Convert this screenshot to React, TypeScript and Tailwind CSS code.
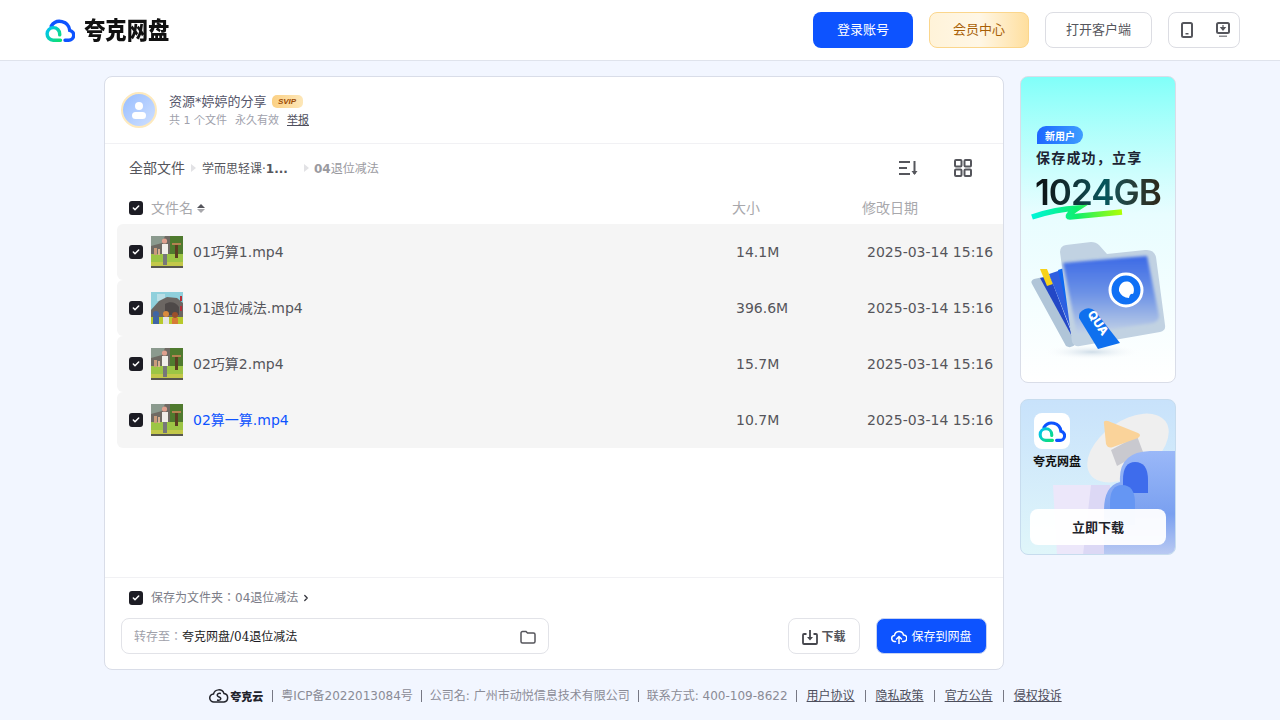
import { Check, ChevronRight } from "lucide-react";

const sans = { fontFamily: '"DejaVu Sans","Noto Sans CJK JP",sans-serif' };

const files = [
  { name: "01巧算1.mp4", size: "14.1M", alt: false, active: false },
  { name: "01退位减法.mp4", size: "396.6M", alt: true, active: false },
  { name: "02巧算2.mp4", size: "15.7M", alt: false, active: false },
  { name: "02算一算.mp4", size: "10.7M", alt: false, active: true },
];

const links = ["用户协议", "隐私政策", "官方公告", "侵权投诉"];

function CloudLogo({ id, className }: { id: string; className: string }) {
  return (
    <svg viewBox="0 0 30 24" fill="none" className={className}>
      <defs>
        <linearGradient id={id} x1="2" y1="10" x2="16" y2="22" gradientUnits="userSpaceOnUse">
          <stop offset="0" stopColor="#00c2f3" />
          <stop offset="1" stopColor="#10e070" />
        </linearGradient>
      </defs>
      <path d="M20 22.200h3.500a5 5 0 0 0 1.200-9.900A10 10 0 0 0 6.300 8" stroke="#0d53ff" strokeWidth="3.400" strokeLinecap="round" />
      <path d="M15.500 22.200H8.200a6.300 6.300 0 1 1 6.500-6.300v1" stroke={`url(#${id})`} strokeWidth="3.400" strokeLinecap="round" />
    </svg>
  );
}

function Tick() {
  return (
    <span className="flex h-[14px] w-[14px] shrink-0 items-center justify-center rounded-[3px] bg-[#1c1c24]">
      <Check className="h-2 w-2 text-white" strokeWidth={4.5} />
    </span>
  );
}

function Thumb({ alt }: { alt: boolean }) {
  if (alt) {
    return (
      <svg viewBox="0 0 32 32" className="h-8 w-8 shrink-0">
        <rect width="32" height="32" fill="#8fd0dc" />
        <rect x="6" y="2" width="8" height="7" fill="#b9dfe6" />
        <path d="M0 18 8 9l8-4 10 1 6 5v15H0z" fill="#6b6662" />
        <path d="M14 12c5-3 11-2 14 3v8H14z" fill="#4e4948" />
        <rect x="29" y="4" width="2" height="5" fill="#b5303a" />
        <rect x="29" y="14" width="2" height="5" fill="#b5303a" />
        <rect y="25" width="32" height="7" fill="#b8c92c" />
        <circle cx="5" cy="22" r="3" fill="#3f65a5" />
        <rect x="2" y="25" width="6" height="7" fill="#3f65a5" />
        <circle cx="15" cy="22" r="3" fill="#d98a3e" />
        <rect x="12" y="25" width="6" height="7" fill="#e4e4e8" />
        <circle cx="24" cy="23" r="3" fill="#9c4f2b" />
        <rect x="21" y="26" width="6" height="6" fill="#d67a37" />
      </svg>
    );
  }
  return (
    <svg viewBox="0 0 32 32" className="h-8 w-8 shrink-0">
      <rect width="32" height="32" fill="#6f6a63" />
      <path d="M0 0h14l-3 7-11 3z" fill="#8b9a8e" />
      <rect x="19" width="13" height="20" fill="#4f7a2e" />
      <rect y="18" width="32" height="8" fill="#9cc545" />
      <rect y="26" width="32" height="4" fill="#c3c84a" />
      <rect y="30" width="32" height="2" fill="#58574f" />
      <rect x="24" y="9" width="3" height="13" fill="#5c3d22" />
      <rect x="21" y="7" width="9" height="2" fill="#b48350" />
      <rect x="3" y="12" width="3" height="7" fill="#c99b7b" />
      <rect x="7" y="13" width="2" height="6" fill="#d8b08f" />
      <circle cx="13.500" cy="5" r="2.600" fill="#e0a08e" />
      <rect x="11" y="8" width="6" height="10" fill="#f1eee9" />
      <rect x="12" y="18" width="4" height="11" fill="#77777a" />
    </svg>
  );
}

function FolderArt() {
  return (
    <svg viewBox="0 0 154 160" className="absolute bottom-0 left-0 h-[160px] w-[154px]">
      <defs>
        <linearGradient id="fold" x1="0" y1="0" x2="0" y2="1">
          <stop offset="0" stopColor="#3b69e6" />
          <stop offset="0.5" stopColor="#6f94e6" />
          <stop offset="1" stopColor="#c3d2e6" />
        </linearGradient>
        <radialGradient id="shade">
          <stop offset="0" stopColor="#cfdde8" />
          <stop offset="1" stopColor="#ffffff" stopOpacity="0" />
        </radialGradient>
        <filter id="soft">
          <feGaussianBlur stdDeviation="1.500" />
        </filter>
      </defs>
      <ellipse cx="71" cy="130" rx="50" ry="8" fill="url(#shade)" />
      <path d="M11 62q-2-3 2-5l14-3 28 68q-5 5-10 2z" fill="#b0c5d8" />
      <path d="M19 56l10-2 25 66z" fill="#2347c6" />
      <path d="M19 47h7l6 15-6 2z" fill="#f7d21a" />
      <path d="M28 52 40 48 54 118z" fill="#2f5fe0" />
      <path d="M37 48l9-3 8 73z" fill="#0f68f0" />
      <path d="M39 30q0-6 6-7l25-3q5 0 8 3l8 9 38-4q9-1 11 7l9 68q1 6-5 7l-80 14q-6 1-8-4z" fill="#c1d2e2" />
      <path d="M42 41q45-4 84-7l12 60q0 5-6 7l-76 11z" fill="url(#fold)" filter="url(#soft)" />
      <circle cx="105" cy="68" r="16" fill="#0f70f5" stroke="#ffffff" strokeWidth="3" />
      <path d="M98 69a7.500 8.500 0 1 1 14 3q-3-1-4 4-7 0-10-7z" fill="#ffffff" />
      <path d="M58 96q-1-6 6-9 6-2 10 2l25 32-22 6z" fill="#0f70ee" />
      <text transform="translate(66 92) rotate(56)" fill="#ffffff" fontSize="12" fontWeight="800" fontFamily="Inter,sans-serif">
        QUA
      </text>
    </svg>
  );
}

function BagArt() {
  return (
    <svg viewBox="0 0 154 154" className="absolute inset-0 h-full w-full">
      <defs>
        <linearGradient id="bag" x1="0" y1="0" x2="0" y2="1">
          <stop offset="0" stopColor="#9ab8f8" />
          <stop offset="0.6" stopColor="#7aa0f0" />
          <stop offset="1" stopColor="#bccbf2" />
        </linearGradient>
      </defs>
      <path d="M32 85h57v70H36z" fill="#ece7fa" />
      <path d="M70 85h19v70H62z" fill="#dcd8f5" />
      <ellipse cx="107" cy="48" rx="46" ry="27" transform="rotate(-35 107 48)" fill="#efefef" />
      <path d="M90 50 116 36l6 16-26 14z" fill="#c9c9cf" />
      <path d="M83 24q-1-4 4-3l30 12q4 2 0 5L92 47q-5 2-7-3z" fill="#fad39a" />
      <path d="M83 156v-46q0-24 16-28q-2-30 30-31 h25v105z" fill="url(#bag)" />
      <path d="M102 93V80q0-18 12-18 13 0 13 18v13z" fill="#3e6cec" />
      <path d="M89 125v-22q0-18 12-18 13 0 13 18v22z" fill="#6596f3" />
    </svg>
  );
}

export default function App() {
  return (
    <div className="flex h-[720px] w-[1280px] flex-col overflow-hidden bg-[#f2f6ff]" style={sans}>
      {/* top bar */}
      <header className="flex h-[61px] shrink-0 items-center justify-between border-b border-[#dfe3ec] bg-white pl-[45px] pr-10">
        <div className="flex items-center gap-[9px]">
          <CloudLogo id="logoA" className="h-6 w-[30px]" />
          <span className="-mt-[3px] origin-left scale-x-[0.89] text-[24px] font-black leading-none text-[#111]" style={{ fontFamily: '"Noto Sans CJK SC",sans-serif' }}>
            夸克网盘
          </span>
        </div>
        <div className="flex items-center gap-4 text-[13px]">
          <button className="h-9 w-[100px] rounded-lg bg-[#0d53ff] text-white">登录账号</button>
          <button className="h-9 w-[100px] rounded-lg border border-[#fbd68c] bg-gradient-to-r from-[#fff3d9] via-[#fff7e6] to-[#ffdf9e] text-[#a85f06]">会员中心</button>
          <button className="h-9 w-[107px] rounded-lg border border-[#dcdde3] bg-white text-[#55565c]">打开客户端</button>
          <div className="flex h-9 w-[72px] items-center justify-between rounded-lg border border-[#dcdde3] bg-white pl-3 pr-[9px]">
            <svg viewBox="0 0 12 16" className="h-4 w-3" fill="none">
              <rect x="1" y="1" width="10" height="14" rx="1.500" stroke="#55565c" strokeWidth="2" />
              <rect x="4.500" y="11" width="3" height="1.500" fill="#55565c" />
            </svg>
            <svg viewBox="0 0 14 16" className="h-4 w-[14px]" fill="none">
              <rect x="1" y="1" width="12" height="10" rx="1.500" stroke="#55565c" strokeWidth="2" />
              <path d="M7 3v3.200M5 5.600h4L7 8z" stroke="#55565c" strokeWidth="1.200" fill="#55565c" />
              <rect x="3" y="13.500" width="8" height="1.500" fill="#8b8b90" />
            </svg>
          </div>
        </div>
      </header>

      <main className="flex flex-1 justify-center gap-4 pt-[15px]">
        {/* share card */}
        <section className="flex h-[594px] w-[900px] flex-col rounded-lg border border-[#d9dde8] bg-white">
          <div className="flex h-[67px] shrink-0 items-center gap-3 border-b border-[#f1f1f4] pl-4">
            <div className="flex h-9 w-9 flex-col items-center justify-center gap-[2px] rounded-full border-2 border-[#fde9bd] bg-gradient-to-br from-[#98bdff] to-[#cfe0ff]">
              <span className="h-2 w-2 rounded-full bg-white" />
              <span className="h-[7px] w-[14px] rounded-full bg-white" />
            </div>
            <div>
              <div className="flex items-center gap-[5px] text-[13px] leading-[18px] text-[#55566a]">
                资源*婷婷的分享
                <span className="flex h-[13px] w-[31px] items-center justify-center rounded-[5px] bg-gradient-to-r from-[#fbd083] to-[#fde7b8] text-[8px] font-extrabold italic text-[#9c4a05]" style={{ fontFamily: '"Liberation Sans",sans-serif' }}>
                  SVIP
                </span>
              </div>
              <div className="mt-[3px] flex items-center text-[11px] leading-[14px] text-[#a0a1ac]">
                <span>共 1 个文件</span>
                <span className="ml-2">永久有效</span>
                <span className="ml-2 text-[#4d4e5c] underline">举报</span>
              </div>
            </div>
          </div>

          <div className="flex h-[48px] shrink-0 items-center pl-6 pr-[31px]">
            <span className="text-[14px] text-[#55565c]">全部文件</span>
            <span className="ml-[6px] h-0 w-0 border-y-[4px] border-l-[5px] border-y-transparent border-l-[#e2e2e5]" />
            <span className="ml-[6px] w-[89px] whitespace-nowrap pt-px text-[12px] text-[#55565c]">学而思轻课·<b>1...</b></span>
            <span className="ml-[13px] h-0 w-0 border-y-[4px] border-l-[5px] border-y-transparent border-l-[#e2e2e5]" />
            <span className="ml-[5px] pt-px text-[12px] text-[#9a9a9f]"><b>04</b>退位减法</span>
            <div className="ml-auto flex items-center gap-[36px]">
              <svg viewBox="0 0 20 16" className="h-4 w-5" fill="none" stroke="#55565c" strokeWidth="2">
                <path d="M1 2h11M1 8h8M1 14h11M16.500 1v13" />
                <path d="M13.500 11l3 4 3-4z" fill="#55565c" stroke="none" />
              </svg>
              <svg viewBox="0 0 18 18" className="h-[18px] w-[18px]" fill="none" stroke="#55565c" strokeWidth="2">
                <rect x="1" y="1" width="6.500" height="6.500" rx="1" />
                <rect x="10.500" y="1" width="6.500" height="6.500" rx="1" />
                <rect x="1" y="10.500" width="6.500" height="6.500" rx="1" />
                <rect x="10.500" y="10.500" width="6.500" height="6.500" rx="1" />
              </svg>
            </div>
          </div>

          {/* table head */}
          <div className="flex h-[32px] shrink-0 items-center pl-6 text-[14px] text-[#a8a8ac]">
            <Tick />
            <span className="ml-2">文件名</span>
            <span className="ml-1 flex flex-col gap-[1px]">
              <span className="h-0 w-0 border-x-[4px] border-b-[4px] border-x-transparent border-b-[#55555b]" />
              <span className="h-0 w-0 border-x-[4px] border-t-[4px] border-x-transparent border-t-[#a8a8ac]" />
            </span>
            <span className="ml-[527px] w-[130px]">大小</span>
            <span>修改日期</span>
          </div>

          {/* rows */}
          <div className="ml-3 flex-1">
            {files.map((f) => (
              <div key={f.name} className="flex h-[56px] items-center rounded-l-md bg-[#f5f5f5] pl-3 text-[14px] text-[#55555b]">
                <Tick />
                <span className="ml-2"><Thumb alt={f.alt} /></span>
                <span className={f.active ? "ml-[10px] w-[543px] text-[#0d53ff]" : "ml-[10px] w-[543px]"}>{f.name}</span>
                <span className="w-[131px]">{f.size}</span>
                <span className="whitespace-nowrap">2025-03-14 15:16</span>
              </div>
            ))}
          </div>

          {/* save options */}
          <div className="h-[92px] shrink-0 border-t border-[#f1f1f4] px-4">
            <div className="flex h-[40px] items-center pl-2 text-[12px] text-[#7c7d88]">
              <Tick />
              <span className="ml-2">保存为文件夹：04退位减法</span>
              <ChevronRight className="ml-[3px] h-[10px] w-[10px] text-[#33343c]" strokeWidth={3} />
            </div>
            <div className="flex items-center">
              <div className="flex h-9 w-[428px] items-center rounded-lg border border-[#e2e3e8] pl-3 pr-3 pt-px text-[12px]">
                <span className="text-[#a0a1aa]">转存至：</span>
                <span className="text-[#1c1c24]" style={{ fontFamily: '"DejaVu Serif","Noto Sans CJK JP",serif' }}>夸克网盘/04退位减法</span>
                <svg viewBox="0 0 16 14" className="ml-auto h-[14px] w-4" fill="none">
                  <path d="M1 3a1.500 1.500 0 0 1 1.500-1.500H6L7.500 3h6A1.500 1.500 0 0 1 15 4.500v7a1.500 1.500 0 0 1-1.500 1.500h-11A1.500 1.500 0 0 1 1 11.500z" stroke="#55555b" strokeWidth="1.500" />
                </svg>
              </div>
              <button className="ml-[239px] flex h-9 w-[72px] items-center justify-center gap-[3px] rounded-lg border border-[#e2e3e8] pt-px text-[12px] font-semibold text-[#55565c]">
                <svg viewBox="0 0 16 16" className="h-4 w-4" fill="none" stroke="#45464d" strokeWidth="1.800">
                  <path d="M4.500 5H2a1 1 0 0 0-1 1v8a1 1 0 0 0 1 1h12a1 1 0 0 0 1-1V6a1 1 0 0 0-1-1h-2.500M8 1v8" />
                  <path d="M5 8h6l-3 3.500z" fill="#45464d" stroke="none" />
                </svg>
                下载
              </button>
              <button className="ml-4 flex h-9 w-[111px] items-center justify-center gap-[4px] rounded-lg border border-[#c7d3f2] bg-[#0d53ff] pt-px text-[12px] text-white">
                <svg viewBox="0 0 16 14" className="h-[14px] w-4" fill="none" stroke="#ffffff" strokeWidth="1.500" strokeLinecap="round">
                  <path d="M4.500 11.500H4a3 3 0 0 1-.5-6A4.600 4.600 0 0 1 12.500 5a3.200 3.200 0 0 1 0 6.500H11.500" />
                  <path d="M8 13.500V7M5.500 9 8 6.500 10.500 9" />
                </svg>
                保存到网盘
              </button>
            </div>
          </div>
        </section>

        {/* promo column */}
        <aside className="flex w-[156px] flex-col gap-4">
          <div className="relative h-[307px] overflow-hidden rounded-lg border border-[#d9dde8] bg-gradient-to-b from-[#80fff9] via-[#e8fdff] via-45% to-white pl-4 pt-[49px]">
            <span className="flex h-[18px] w-[46px] items-center justify-center rounded-[9px] rounded-bl-none bg-gradient-to-r from-[#1f66ff] to-[#3f9cff] text-[10px] font-bold text-white" style={{ fontFamily: '"Noto Sans CJK SC",sans-serif' }}>新用户</span>
            <div className="ml-[-1px] mt-[3px] whitespace-nowrap text-[14px] font-bold tracking-[1.2px] text-[#1d2433]" style={{ fontFamily: '"Noto Sans CJK SC",sans-serif' }}>保存成功，立享</div>
            <div className="ml-[-2px] mt-[6px] whitespace-nowrap bg-gradient-to-r from-[#0c1012] via-[#04565c] to-[#2c1c08] bg-clip-text text-[35px] font-semibold leading-[36px] tracking-[-1px] text-transparent" style={{ fontFamily: "Inter,sans-serif" }}>1024GB</div>
            <svg viewBox="0 0 92 16" className="absolute left-[10px] top-[127px] h-4 w-[92px]" fill="none">
              <defs>
                <linearGradient id="swoosh" x1="0" y1="0" x2="92" y2="0" gradientUnits="userSpaceOnUse">
                  <stop offset="0" stopColor="#00f5dc" />
                  <stop offset="0.5" stopColor="#0fef6c" />
                  <stop offset="1" stopColor="#b4ff00" />
                </linearGradient>
              </defs>
              <path d="M1 13q24-8 46-9-14 9-8 9l52-5" stroke="url(#swoosh)" strokeWidth="5.500" />
            </svg>
            <FolderArt />
          </div>

          <div className="relative h-[156px] overflow-hidden rounded-lg border border-[#c7dcee] bg-gradient-to-b from-[#c8e2fb] to-[#e0f6fa] pl-[13px] pt-[13px]">
            <BagArt />
            <div className="relative flex h-9 w-9 items-center justify-center rounded-lg bg-white">
              <CloudLogo id="logoB" className="h-[22px] w-[28px]" />
            </div>
            <div className="relative ml-[-1px] mt-[3px] text-[12px] font-bold leading-[18px] text-[#111]" style={{ fontFamily: '"Noto Sans CJK SC",sans-serif' }}>夸克网盘</div>
            <button className="absolute bottom-[9px] left-[9px] h-9 w-[136px] rounded-lg bg-white/95 text-[13px] font-bold text-[#22232b]" style={{ fontFamily: '"Noto Sans CJK SC",sans-serif' }}>立即下载</button>
          </div>
        </aside>
      </main>

      {/* footer */}
      <footer className="flex h-[49px] shrink-0 items-center justify-center pr-[9px] pt-px text-[12px] text-[#8a8b96]">
        <svg viewBox="0 0 20 16" className="h-4 w-5" fill="none" stroke="#22232b" strokeWidth="1.500">
          <path d="M5 14a4 4 0 0 1-.5-8A5.500 5.500 0 0 1 15 5.500a4.300 4.300 0 0 1 0 8.500H5z" />
          <path d="M12 5.500C8 4.500 7 8 10 9s2 4-2 3" />
        </svg>
        <span className="ml-[1px] text-[11px] font-black text-[#22232b]" style={{ fontFamily: '"Noto Sans CJK SC",sans-serif' }}>夸克云</span>
        <span className="ml-[9px] mr-[8px] h-3 w-px bg-[#777884]" />
        <span>粤ICP备2022013084号</span>
        <span className="mx-2 h-3 w-px bg-[#777884]" />
        <span>公司名: 广州市动悦信息技术有限公司</span>
        <span className="mx-2 h-3 w-px bg-[#777884]" />
        <span>联系方式: 400-109-8622</span>
        <span className="ml-2 mr-[10px] h-3 w-px bg-[#777884]" />
        {links.map((l, i) => (
          <span key={l} className="flex items-center">
            <a className="text-[#4d4e5c] underline">{l}</a>
            {i < links.length - 1 && <span className="mx-[10px] h-3 w-px bg-[#777884]" />}
          </span>
        ))}
      </footer>
    </div>
  );
}
